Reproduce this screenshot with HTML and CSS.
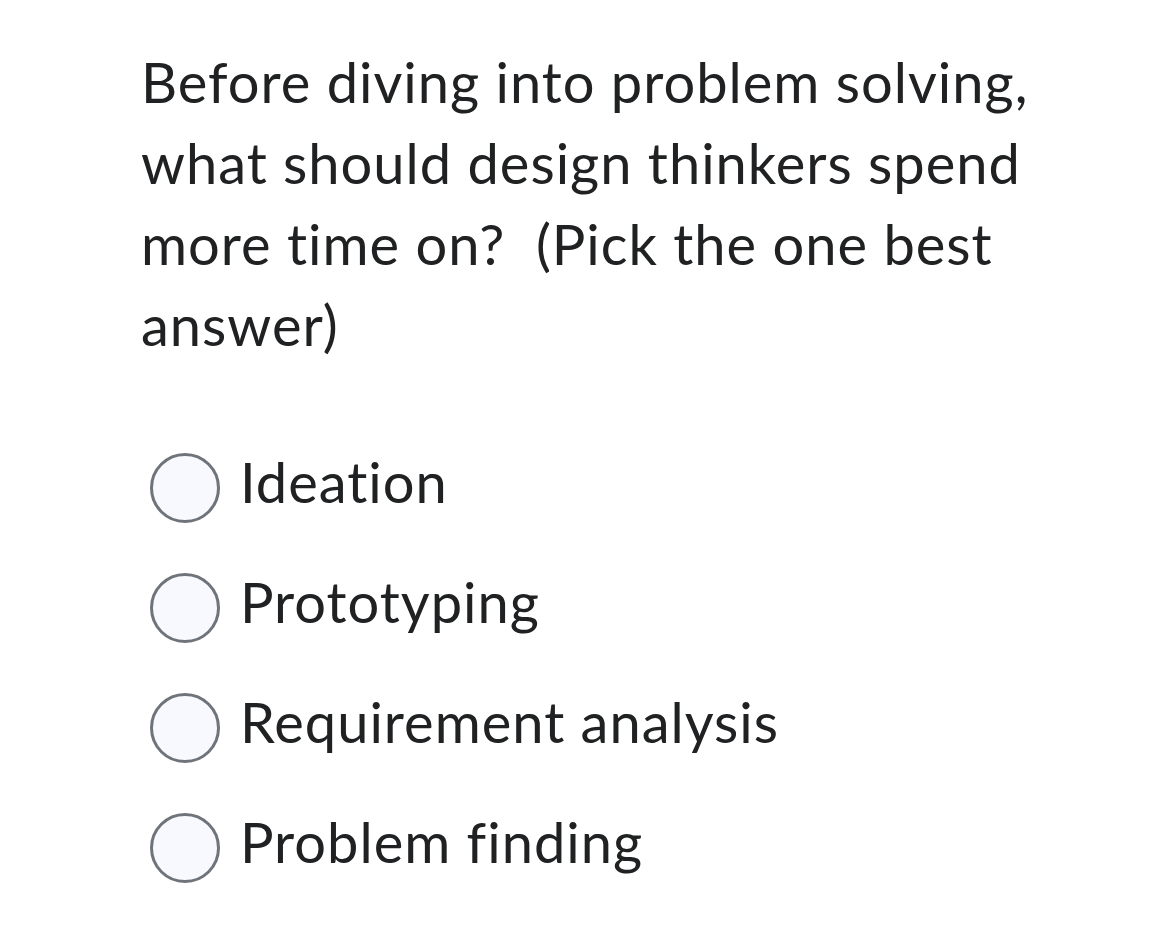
FILE: index.html
```html
<!DOCTYPE html>
<html>
<head>
<meta charset="utf-8">
<link rel="stylesheet" href="styles.css">
</head>
<body>
<div class="quiz">
  <p class="question">Before diving into problem solving, what should design thinkers spend more time on?&nbsp; (Pick the one best answer)</p>
  <div class="options">
    <label class="option"><span class="radio"></span><span class="label">Ideation</span></label>
    <label class="option"><span class="radio"></span><span class="label">Prototyping</span></label>
    <label class="option"><span class="radio"></span><span class="label">Requirement analysis</span></label>
    <label class="option"><span class="radio"></span><span class="label">Problem finding</span></label>
  </div>
</div>
</body>
</html>
```
FILE: styles.css
```css
html, body {
  margin: 0;
  padding: 0;
  background: #ffffff;
}
body {
  font-family: Lato, "Liberation Sans", sans-serif;
  color: #202122;
  font-variant-ligatures: none;
  letter-spacing: 1px;
}
.quiz {
  padding: 41px 0 0 141px;
}
.question {
  margin: 0;
  width: 940px;
  font-size: 56px;
  line-height: 81px;
}
.options {
  margin-top: 82px;
  display: flex;
  flex-direction: column;
  gap: 44px;
}
.option {
  display: flex;
  align-items: flex-start;
  gap: 20px;
  padding-left: 9px;
}
.radio {
  box-sizing: border-box;
  width: 70px;
  height: 70px;
  margin-top: 6px;
  border: 3px solid #6e7479;
  border-radius: 50%;
  background: #f7f9fe;
  flex: none;
}
.label {
  font-size: 56px;
  line-height: 70px;
}
```
